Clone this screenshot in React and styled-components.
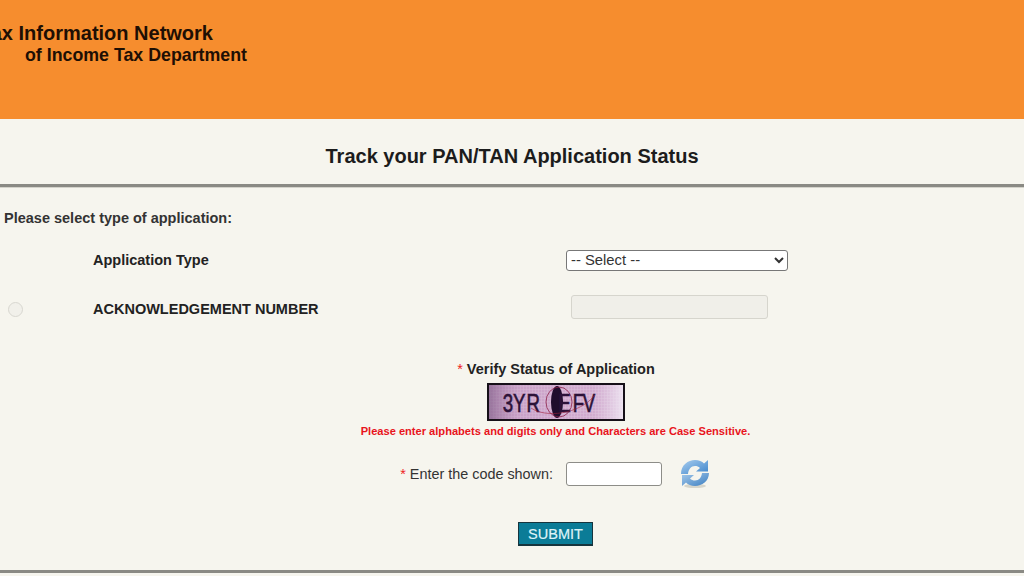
import { createGlobalStyle } from "styled-components";
import styled from "styled-components";

const GlobalStyle = createGlobalStyle`
  html, body {
    margin: 0;
    padding: 0;
    height: 576px;
    overflow: hidden;
    background: #f6f5ee;
    font-family: "Liberation Sans", Arial, sans-serif;
    color: #222;
  }
`;

function Captcha() {
  return (
    <svg width="138" height="38" viewBox="0 0 138 38" style={{ display: "block" }}>
      <defs>
        <pattern id="mesh" width="3" height="3" patternUnits="userSpaceOnUse">
          <rect width="3" height="3" fill="#cfa6cc" />
          <path d="M0 0H3M0 0V3" stroke="#dcc0da" strokeWidth="1" />
        </pattern>
        <linearGradient id="fade" x1="0" x2="1" y1="0" y2="0">
          <stop offset="0" stopColor="#7e5c86" stopOpacity="0.7" />
          <stop offset="0.25" stopColor="#b58bb4" stopOpacity="0.15" />
          <stop offset="0.78" stopColor="#e8d8ea" stopOpacity="0.1" />
          <stop offset="1" stopColor="#f2ecf6" stopOpacity="0.85" />
        </linearGradient>
      </defs>
      <rect x="0" y="0" width="138" height="38" fill="#161018" />
      <rect x="2" y="2" width="134" height="34" fill="url(#mesh)" />
      <rect x="2" y="2" width="134" height="34" fill="url(#fade)" />
      <ellipse cx="70" cy="19" rx="6" ry="16" fill="#1f0d2c" />
      <ellipse cx="72" cy="19" rx="13" ry="15" fill="none" stroke="#8c2048" strokeWidth="0.8" />
      <text
        transform="scale(0.72 1)"
        x="22 36 55 99 119 133"
        y="29"
        fontFamily="'Liberation Sans', sans-serif"
        fontSize="26"
        fill="#2c1238"
        stroke="#2c1238"
        strokeWidth="0.6"
      >
        3YREFV
      </text>
      <path d="M44 25C58 35 92 32 108 12" fill="none" stroke="#a0203a" strokeWidth="0.6" />
    </svg>
  );
}

function RefreshIcon() {
  return (
    <svg width="30" height="30" viewBox="0 0 30 30">
      <defs>
        <linearGradient id="spinTop" x1="0" x2="1" y1="0" y2="1">
          <stop offset="0" stopColor="#a9cdee" />
          <stop offset="1" stopColor="#3f86cc" />
        </linearGradient>
        <linearGradient id="spinBottom" x1="0" x2="1" y1="0" y2="1">
          <stop offset="0" stopColor="#a5c9ea" />
          <stop offset="1" stopColor="#3c7fc2" />
        </linearGradient>
      </defs>
      <ellipse cx="15" cy="27" rx="11" ry="2" fill="#c9c7bc" opacity="0.7" />
      <path d="M1 15C1 6 8 1 15 1C19 1 22 2.500 24 4.500L28 1V12.500H16L20 9C18.500 7.500 17 7 15 7C11 7 8.500 10.500 8 15Z" fill="url(#spinTop)" />
      <path d="M29 14C29 22 22 27 15 27C11 27 8 25.500 6 23.500L2 27V16H14L10 19.500C11.500 21 13 21.500 15 21.500C19 21.500 21.500 18.500 22 14Z" fill="url(#spinBottom)" />
    </svg>
  );
}

export default function App() {
  return (
    <>
      <GlobalStyle />
      <Page>
        <Header>
          <HeaderLine>Tax Information Network</HeaderLine>
          <HeaderSub>of Income Tax Department</HeaderSub>
        </Header>
        <Title>Track your PAN/TAN Application Status</Title>
        <Rule />
        <Form>
          <Prompt>Please select type of application:</Prompt>
          <Row>
            <span />
            <FieldLabel>Application Type</FieldLabel>
            <Select defaultValue="">
              <option value="">-- Select --</option>
            </Select>
          </Row>
          <AckRow>
            <Radio type="radio" disabled />
            <FieldLabel>ACKNOWLEDGEMENT NUMBER</FieldLabel>
            <DisabledInput disabled />
          </AckRow>
          <Verify>
            <Star>*</Star> Verify Status of Application
          </Verify>
          <CaptchaWrap>
            <Captcha />
          </CaptchaWrap>
          <Warning>Please enter alphabets and digits only and Characters are Case Sensitive.</Warning>
          <CodeRow>
            <CodeLabel>
              <Star>*</Star> Enter the code shown:
            </CodeLabel>
            <CodeInput />
            <RefreshWrap>
              <RefreshIcon />
            </RefreshWrap>
          </CodeRow>
          <SubmitRow>
            <Submit>SUBMIT</Submit>
          </SubmitRow>
        </Form>
        <BottomRule />
      </Page>
    </>
  );
}

const Page = styled.div`
  width: 1024px;
  height: 576px;
  overflow: hidden;
  display: flex;
  flex-direction: column;
`;

const Header = styled.div`
  height: 119px;
  flex: none;
  box-sizing: border-box;
  background: #f68d2e;
  color: #1e0f04;
  font-weight: bold;
  padding-top: 22px;
  white-space: nowrap;
`;

const HeaderLine = styled.div`
  font-size: 20px;
  line-height: 22px;
  margin-left: -20px;
`;

const HeaderSub = styled.div`
  font-size: 17.800px;
  line-height: 22px;
  margin-left: 25px;
`;

const Title = styled.h1`
  margin: 0;
  height: 65px;
  flex: none;
  display: flex;
  align-items: center;
  justify-content: center;
  font-size: 20px;
  font-weight: bold;
  color: #1c1c1c;
  padding-top: 9px;
  box-sizing: border-box;
`;

const Rule = styled.div`
  height: 3px;
  flex: none;
  background: #8a8a84;
  border-bottom: 1px solid #d4d3cb;
`;

const Form = styled.div`
  flex: 1;
  display: flex;
  flex-direction: column;
  font-size: 14.500px;
`;

const Prompt = styled.div`
  font-weight: bold;
  margin: 22px 0 0 4px;
  line-height: 17px;
  color: #333;
`;

const Row = styled.div`
  display: grid;
  grid-template-columns: 93px 473px 1fr;
  align-items: center;
  margin-top: 22px;
  height: 22px;
`;

const AckRow = styled(Row)`
  margin-top: 26px;
  height: 24px;
`;

const FieldLabel = styled.div`
  font-weight: bold;
  color: #222;
`;

const Select = styled.select`
  width: 222px;
  height: 21px;
  box-sizing: border-box;
  font-family: "Liberation Sans", Arial, sans-serif;
  font-size: 14.800px;
  color: #333;
  background: #fff;
  border: 1px solid #777;
  border-radius: 3px;
`;

const Radio = styled.input`
  appearance: none;
  width: 15px;
  height: 15px;
  margin: 0 0 0 8px;
  border: 1.500px solid #d8d7d0;
  border-radius: 50%;
  background: #f1f0ea;
  box-sizing: border-box;
`;

const DisabledInput = styled.input`
  width: 197px;
  height: 24px;
  margin: -2px 0 0 5px;
  align-self: start;
  box-sizing: border-box;
  background: #f0efe9;
  border: 1px solid #d6d5cd;
  border-radius: 3px;
`;

const Verify = styled.div`
  margin-top: 40px;
  text-align: center;
  font-weight: bold;
  line-height: 17px;
  padding-left: 88px;
  color: #222;
`;

const Star = styled.span`
  color: #e22;
  font-weight: normal;
`;

const CaptchaWrap = styled.div`
  display: flex;
  justify-content: center;
  margin-top: 5px;
  padding-left: 87px;
`;

const Warning = styled.div`
  margin-top: 4px;
  text-align: center;
  color: #e8141c;
  font-size: 11.100px;
  font-weight: bold;
  line-height: 13px;
  padding-left: 87px;
`;

const CodeRow = styled.div`
  display: flex;
  align-items: center;
  margin-top: 24px;
  height: 24px;
`;

const CodeLabel = styled.div`
  width: 553px;
  text-align: right;
  font-size: 14.400px;
  color: #333;
`;

const CodeInput = styled.input`
  width: 96px;
  height: 24px;
  margin-left: 13px;
  box-sizing: border-box;
  background: #fff;
  border: 1px solid #8d8d88;
  border-radius: 3px;
`;

const RefreshWrap = styled.div`
  margin-left: 18px;
  height: 30px;
  flex: none;
  display: flex;
  align-items: center;
`;

const SubmitRow = styled.div`
  display: flex;
  justify-content: center;
  margin-top: 36px;
  padding-left: 87px;
`;

const Submit = styled.button`
  width: 75px;
  height: 24px;
  padding: 0;
  background: #0b7c97;
  color: #dff3f7;
  font-family: "Liberation Sans", Arial, sans-serif;
  font-size: 14.500px;
  -webkit-text-stroke: 0.2px #dff3f7;
  border: 1px solid #16343d;
  border-bottom-width: 2px;
`;

const BottomRule = styled.div`
  height: 3px;
  flex: none;
  margin-bottom: 3px;
  background: #8a8a84;
`;
